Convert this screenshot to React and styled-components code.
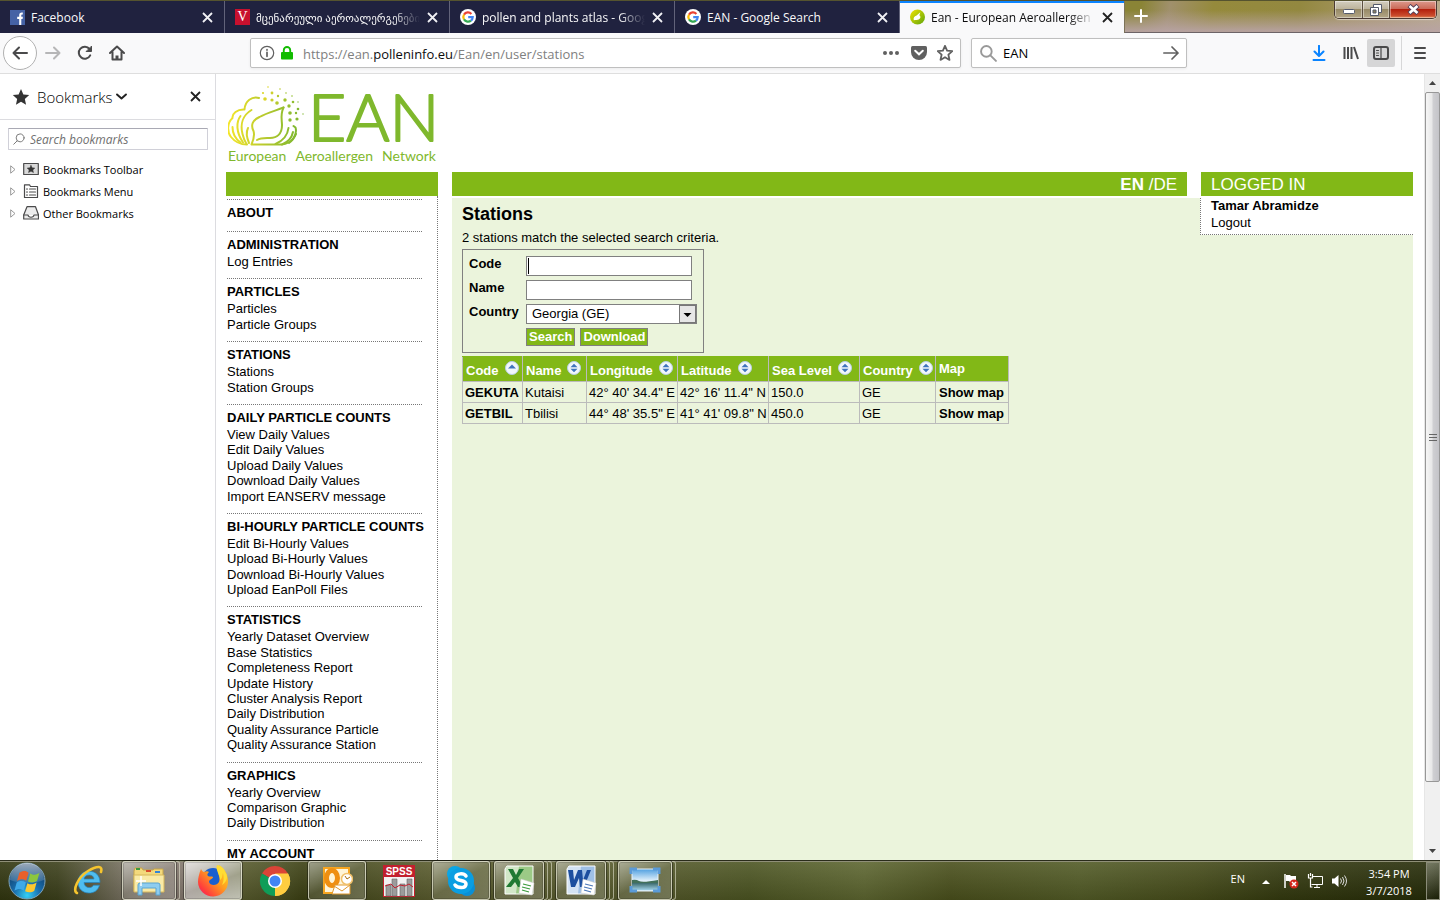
import React from "react";
import styled, { createGlobalStyle, css } from "styled-components";

const UI_FONT = '"Open Sans", "Noto Sans", "DejaVu Sans", sans-serif';
const PAGE_FONT = '"Liberation Sans", Arial, sans-serif';
const GREEN = "#82b817";
const PALE = "#ebf4dc";

const GlobalStyle = createGlobalStyle`
  *, *::before, *::after { box-sizing: border-box; }
  body { margin: 0; font-family: ${UI_FONT}; font-size: 12px; color: #000; overflow: hidden; }
  button, input, select { font: inherit; color: inherit; margin: 0; }
  button { border: 0; padding: 0; background: none; }
  a { color: inherit; text-decoration: none; }
  h1, h2, p, ul { margin: 0; padding: 0; }
  ul { list-style: none; }
  svg { display: block; flex: none; }
`;

/* ---------- browser window ---------- */

const Window = styled.div`
  display: flex;
  flex-direction: column;
  height: 100vh;
  background: #fff;
`;

const TitleBar = styled.header`
  display: flex;
  flex: none;
  height: 33px;
  border-top: 1px solid #55532f;
  background: linear-gradient(100deg, #8a8436 0 79%, #a0906c 81%, #958a3c 84%, #938840 90%, #a89868 95%, #b9ab8c);
`;

const GlassShade = styled.div`
  display: flex;
  flex: 1;
  justify-content: space-between;
  align-items: flex-start;
  padding-right: 3px;
  border-bottom: 1px solid #6d6467;
  background: linear-gradient(rgba(150, 130, 150, 0) 30%, rgba(184, 163, 164, 0.9) 95%);
`;

const Tab = styled.div`
  display: flex;
  align-items: center;
  width: 225px;
  gap: 6px;
  padding: 0 10px;
  color: ${(p) => (p.$active ? "#0c0c0d" : "#f9f9fa")};
  background: ${(p) => (p.$active ? "#f9f9fa" : "#20223f")};
  border-right: 1px solid ${(p) => (p.$active ? "#7c7358" : "#62637a")};
  ${(p) => p.$active && css`box-shadow: inset 0 2px #0a84ff;`}
`;

const TabTitle = styled.span`
  flex: 1;
  overflow: hidden;
  padding-top: 2px;
  white-space: nowrap;
  font-size: ${(p) => (p.$small ? 11 : 12)}px;
  line-height: 18px;
  ${(p) => p.$fade && css`mask-image: linear-gradient(to right, #000 84%, transparent);`}
`;

const IconButton = styled.button`
  display: flex;
  align-items: center;
  justify-content: center;
  flex: none;
  width: ${(p) => p.$width || 32}px;
  height: ${(p) => p.$height || 28}px;
  border-radius: 2px;
  background: ${(p) => (p.$pressed ? "#d6d6d7" : "none")};
`;

const WindowControls = styled.div`
  display: flex;
  height: 18px;
  border: 1px solid #4b3a33;
  border-top: 0;
  border-radius: 0 0 5px 5px;
  overflow: hidden;
  box-shadow: 0 1px 1px rgba(255, 255, 255, 0.5);
`;

const WindowButton = styled.button`
  display: flex;
  align-items: center;
  justify-content: center;
  width: ${(p) => (p.$close ? 47 : 27)}px;
  border-left: ${(p) => (p.$first ? 0 : 1)}px solid #5d5040;
  box-shadow: inset 0 0 0 1px rgba(255, 255, 255, 0.4);
  background: ${(p) =>
    p.$close
      ? "linear-gradient(#dc9a8d, #cb6a58 45%, #b3200d 50%, #c94a2c 85%, #e08a58)"
      : "linear-gradient(#d3cec0, #bdb49c 45%, #978a66 50%, #b3a687)"};
`;

const Toolbar = styled.div`
  display: flex;
  align-items: center;
  flex: none;
  height: 41px;
  padding: 0 3px;
  background: #f9f9fa;
  border-bottom: 1px solid #dedede;
`;

const BackButton = styled.button`
  display: flex;
  align-items: center;
  justify-content: center;
  width: 34px;
  height: 34px;
  border: 1px solid #b1b1b1;
  border-radius: 50%;
  background: #fff;
`;

const Field = styled.div`
  display: flex;
  align-items: center;
  flex: ${(p) => (p.$wide ? "1" : "0 0 216px")};
  min-width: 0;
  height: 30px;
  margin-left: ${(p) => (p.$wide ? 117 : 10)}px;
  padding: 0 6px 0 8px;
  gap: 6px;
  font-size: 13px;
  background: #fff;
  border: 1px solid #bfbfbf;
  border-radius: 2px;
  box-shadow: 0 1px 3px rgba(0, 0, 0, 0.06);
`;

const Address = styled.a`
  flex: 1;
  padding: 2px 0 0 4px;
  color: #808080;
  line-height: 20px;
  b { font-weight: 400; color: #0c0c0d; }
`;

const SearchInput = styled.input`
  flex: 1;
  width: 0;
  min-width: 0;
  padding: 0;
  border: 0;
  outline: 0;
  background: none;
`;

const ToolbarEnd = styled.div`
  display: flex;
  align-items: center;
  margin-left: 116px;
`;

const Separator = styled.span`
  width: 1px;
  height: 34px;
  margin-left: 6px;
  background: #d7d7d8;
`;

const Content = styled.div`
  display: flex;
  flex: 1;
  min-height: 0;
`;

/* ---------- bookmarks sidebar ---------- */

const Sidebar = styled.aside`
  flex: none;
  width: 216px;
  border-right: 1px solid #dcdce0;
`;

const SidebarHeader = styled.div`
  display: flex;
  align-items: center;
  height: 46px;
  padding: 0 12px;
  border-bottom: 1px solid #dcdce0;
`;

const SidebarTitle = styled.button`
  display: flex;
  flex: 1;
  align-items: center;
  gap: 3px;
  padding-left: 7px;
  font-size: 15px;
  font-weight: 300;
`;

const BookmarkSearch = styled.label`
  display: flex;
  align-items: center;
  gap: 5px;
  height: 22px;
  margin: 8px 7px 8px 8px;
  padding: 0 4px;
  border: 1px solid #d0d0d8;
  border-top-color: #a9a9b4;
  border-radius: 1px;
  input { font-style: italic; }
  input::placeholder { color: #6f6f6f; opacity: 1; }
`;

const TreeItem = styled.li`
  display: flex;
  align-items: center;
  height: 22px;
  padding-left: 10px;
  gap: 4px;
  font-size: 11px;
`;

const Twisty = styled.span`
  display: flex;
  width: 9px;
`;

/* ---------- EAN page ---------- */

const Page = styled.main`
  display: flex;
  flex-direction: column;
  flex: 1;
  min-width: 0;
  overflow: hidden;
  padding: 0 11px 0 10px;
  font-family: ${PAGE_FONT};
  font-size: 13px;
`;

const Brand = styled.div`
  flex: none;
  width: 212px;
  height: 98px;
  padding: 10px 2px 0;
  color: #7fb82d;
`;

const Tagline = styled.div`
  display: flex;
  justify-content: space-between;
  font: 14px/16px Lato, sans-serif;
`;

const Columns = styled.div`
  display: flex;
  flex: 1;
  min-height: 0;
  gap: 14px;
`;

const Bar = styled.div`
  flex: ${(p) => (p.$side ? "0 0 212px" : "1")};
  height: 24px;
  padding: 1px 10px 0;
  font-size: 17px;
  line-height: 24px;
  text-align: ${(p) => (p.$side ? "left" : "right")};
  color: #fff;
  background: ${GREEN};
`;

const NavColumn = styled.div`
  display: flex;
  flex-direction: column;
  width: 212px;
`;

const Nav = styled.nav`
  flex: 1;
  min-height: 0;
  overflow: hidden;
  padding: 3px 15px 0 1px;
  border-right: 1px dotted #777;
`;

const NavBar = styled.div`
  flex: none;
  height: 24px;
  background: ${GREEN};
`;

const NavGroup = styled.section`
  padding: 4px 0 9px;
  border-top: 1px dotted #777;
  line-height: 1.185;
`;

const NavHeading = styled.h2`
  font-size: 13px;
  line-height: 18px;
  white-space: nowrap;
`;

const MainColumn = styled.div`
  display: flex;
  flex-direction: column;
  flex: 1;
`;

const BarRow = styled.div`
  display: flex;
  flex: none;
  gap: 14px;
`;

const Panel = styled.div`
  display: flex;
  flex: 1;
  align-items: flex-start;
  justify-content: space-between;
  margin-top: 2px;
  padding-left: 10px;
  background: ${PALE};
`;

const UserBox = styled.div`
  width: 213px;
  height: 37px;
  padding-left: 10px;
  line-height: 16px;
  background: #fff;
  border: dotted #777;
  border-width: 0 0 1px 1px;
  a, b { display: block; }
  b { margin-bottom: 1px; }
`;

const Title = styled.h1`
  padding-top: 5px;
  font-size: 18px;
  line-height: 22px;
`;

const Summary = styled.p`
  margin: 5px 0 3px;
  line-height: 16px;
`;

const SearchForm = styled.form`
  display: grid;
  grid-template-columns: 57px 171px;
  row-gap: 4px;
  width: 242px;
  padding: 6px;
  border: 1px solid #808080;
  label { font-weight: 700; line-height: 16px; }
`;

const TextInput = styled.input`
  width: 166px;
  height: 20px;
  padding: 1px 2px;
  border: 1px solid #808080;
  border-radius: 0;
  outline: 0;
  background: #fff;
  ${(p) =>
    p.$caret &&
    css`
      caret-color: transparent;
      background: linear-gradient(#000, #000) 1px 1px / 1px 16px no-repeat #fff;
    `}
`;

const SelectBox = styled.div`
  display: flex;
  position: relative;
  svg { position: absolute; right: 1px; top: 1px; pointer-events: none; }
`;

const Select = styled.select`
  appearance: none;
  width: 100%;
  height: 20px;
  padding: 0 20px 2px 5px;
  border: 1px solid #808080;
  border-radius: 0;
  background: #fff;
`;

const Actions = styled.div`
  display: flex;
  grid-column: 2;
  gap: 5px;
`;

const ActionButton = styled.button`
  height: 18px;
  padding: 0 2px;
  border: 1px solid #808080;
  font-weight: 700;
  line-height: 16px;
  color: #fff;
  background: ${GREEN};
`;

const StationTable = styled.table`
  margin-top: 3px;
  width: 547px;
  table-layout: fixed;
  border-collapse: collapse;
  th, td { padding: 0 0 0 2px; border: 1px solid #bbb; text-align: left; white-space: nowrap; }
  th { height: 25px; padding-left: 3px; color: #fff; background: ${GREEN}; border-top-color: ${GREEN}; border-bottom-color: #bbb; }
  td { height: 21px; }
  td:first-child, td:last-child { font-weight: 700; }
  td:last-child { padding-left: 3px; }
`;

const HeadCell = styled.div`
  display: flex;
  align-items: center;
  gap: 6px;
  padding-bottom: ${(p) => (p.$sortable ? 3 : 1)}px;
  span { padding-top: ${(p) => (p.$sortable ? 5 : 0)}px; }
`;

/* ---------- scrollbar ---------- */

const Scrollbar = styled.div`
  display: flex;
  flex-direction: column;
  align-items: center;
  flex: none;
  width: 16px;
  padding: 6px 0;
  background: #f0f0f0;
  border-left: 1px solid #e6e6e6;
`;

const Thumb = styled.div`
  display: flex;
  align-items: center;
  justify-content: center;
  flex: 689;
  width: 15px;
  margin-top: 6px;
  border: 1px solid #979797;
  border-radius: 2px;
  background: linear-gradient(to right, #f6f6f6, #e8e8e8 45%, #cfcfd2 55%, #c4c4c8);
`;

const TrackRest = styled.div`
  flex: 66;
`;

/* ---------- taskbar ---------- */

const Taskbar = styled.footer`
  display: flex;
  flex: none;
  height: 40px;
  border-top: 1px solid #2a2c1b;
  box-shadow: inset 0 1px #8f8f78;
  background:
    linear-gradient(rgba(255, 255, 255, 0.1), rgba(0, 0, 0, 0.12)),
    linear-gradient(to right, #31360f, #3c401b 4%, #7c7566 9%, #85796f 13%, #56592b 17%, #4c5124 19%, #3c4013 21%, #5a5c2e 30%, #55592b 45%, #4c5522 52%, #5d6630 60%, #4a501c 66%, #525b26 75%, #464c1a 83%, #343a0f 89%, #252b08);
  color: #fff;
`;

const StartButton = styled.button`
  display: flex;
  align-items: center;
  justify-content: center;
  width: 54px;
`;

const Apps = styled.div`
  display: flex;
  flex: 1;
  gap: 4px;
  padding-left: 6px;
`;

const AppSlot = styled.div`
  display: flex;
  width: 58px;
  height: 39px;
`;

const AppButton = styled.button`
  display: flex;
  align-items: center;
  justify-content: center;
  flex: 1;
  ${(p) =>
    p.$open &&
    css`
      border: 1px solid rgba(225, 225, 205, 0.75);
      border-radius: 3px;
      background: ${p.$active
        ? "linear-gradient(160deg, rgba(255,255,255,.75), rgba(255,255,255,.4) 55%, rgba(255,255,255,.65))"
        : "linear-gradient(150deg, rgba(255,255,255,.45), rgba(255,255,255,.12) 50%, rgba(255,255,255,.22))"};
      box-shadow: inset 0 0 0 1px rgba(0, 0, 0, 0.15), 0 0 0 1px rgba(0, 0, 0, 0.35);
    `}
`;

const StackEdge = styled.span`
  width: 4px;
  border: 1px solid rgba(225, 225, 205, 0.6);
  border-left: 0;
  border-radius: 0 3px 3px 0;
`;

const Tray = styled.div`
  display: flex;
  align-items: center;
  font-size: 12px;
`;

const Language = styled.span`
  padding-bottom: 5px;
  font-size: 11px;
`;

const TrayIcons = styled.div`
  display: flex;
  align-items: center;
  gap: 8px;
  padding: 1px 17px 0 17px;
`;

const TrayArrow = styled.svg`
  margin-right: 5px;
`;

const Clock = styled.time`
  width: 50px;
  text-align: center;
  font-size: 11px;
  line-height: 17px;
  padding-top: 2px;
  white-space: nowrap;
`;

const ShowDesktop = styled.button`
  width: 14px;
  height: 38px;
  margin-left: 12px;
  border: 1px solid #8a8b78;
  background: linear-gradient(150deg, rgba(255, 255, 255, 0.3), rgba(0, 0, 0, 0.2));
`;

/* ---------- icons ---------- */

const Stroke = ({ size = 16, color = "#4a4a4b", width = 2, children }) => (
  <svg width={size} height={size} viewBox="0 0 16 16" fill="none" stroke={color} strokeWidth={width} strokeLinecap="round" strokeLinejoin="round">
    {children}
  </svg>
);

const CloseIcon = ({ color }) => (
  <svg width="11" height="11" viewBox="0 0 11 11" stroke={color} strokeWidth="1.8">
    <path d="M1 1l9 9M10 1L1 10" />
  </svg>
);

const GoogleIcon = () => (
  <svg width="16" height="16" viewBox="0 0 16 16">
    <circle cx="8" cy="8" r="8" fill="#fff" />
    <g fill="none" strokeWidth="2.2">
      <path d="M11.4 4.9A4.7 4.7 0 0 0 4 5.6" stroke="#ea4335" />
      <path d="M4 5.6a4.7 4.7 0 0 0 0 4.8" stroke="#fbbc05" />
      <path d="M4 10.4a4.7 4.7 0 0 0 7 1.2" stroke="#34a853" />
      <path d="M11 11.6A4.7 4.7 0 0 0 12.700 8.200H8.200" stroke="#4285f4" />
    </g>
  </svg>
);

const FacebookIcon = () => (
  <svg width="15" height="15" viewBox="0 0 15 15">
    <rect width="15" height="15" fill="#4562a5" />
    <path d="M9.200 15V9h-2V6.800h2V5.200c0-2 1.200-2.900 3.600-2.600v2c-1.200-.1-1.500.2-1.500 1v1.200h1.600L12.600 9h-1.300v6z" fill="#fff" />
  </svg>
);

const BadgeV = styled.span`
  display: flex;
  align-items: center;
  justify-content: center;
  width: 15px;
  height: 16px;
  font: 14px/16px "Liberation Serif", serif;
  color: #fff;
  background: #c8102e;
`;

const EanFavicon = () => (
  <svg width="15" height="16" viewBox="0 0 16 16">
    <defs>
      <linearGradient id="fav" x1="0" y1="0" x2="1" y2="1">
        <stop offset="0" stopColor="#f2e400" />
        <stop offset="1" stopColor="#5fa50c" />
      </linearGradient>
    </defs>
    <circle cx="8" cy="8" r="8" fill="url(#fav)" />
    <path d="M4 11.500c-.6-3 .4-4.500 3-5.200l4-3.300-1 3.200c1.600 1 1.600 3.600-.8 4.400-1.200.8-3 .1-5.200.9z" fill="#fff" />
  </svg>
);

const TABS = [
  { title: "Facebook", icon: <FacebookIcon /> },
  { title: "მცენარეული აეროალერგენები", icon: <BadgeV>V</BadgeV>, fade: true, small: true },
  { title: "pollen and plants atlas - Google Search", icon: <GoogleIcon />, fade: true },
  { title: "EAN - Google Search", icon: <GoogleIcon /> },
  { title: "Ean - European Aeroallergen Network", icon: <EanFavicon />, fade: true, active: true },
];

const StarShape = "M8 .8l2.100 4.900 5.200.5-3.900 3.500 1.100 5.200L8 12.200l-4.500 2.700 1.100-5.200L.7 6.200l5.200-.5z";

function BrowserTabs() {
  return (
    <TitleBar>
      {TABS.map((t) => (
        <Tab key={t.title} $active={t.active}>
          {t.icon}
          <TabTitle $fade={t.fade} $small={t.small}>{t.title}</TabTitle>
          <IconButton $width={13} $height={16} aria-label="Close tab">
            <CloseIcon color={t.active ? "#222" : "#f0f0f4"} />
          </IconButton>
        </Tab>
      ))}
      <GlassShade>
        <IconButton $width={32} $height={30} aria-label="New tab">
          <Stroke color="#fff" width={2}><path d="M8 2v12M2 8h12" /></Stroke>
        </IconButton>
        <WindowControls>
          <WindowButton $first aria-label="Minimize">
            <svg width="12" height="9"><rect x=".5" y="4.500" width="11" height="4" rx="1" fill="#fff" stroke="#545b6c" /></svg>
          </WindowButton>
          <WindowButton aria-label="Restore">
            <svg width="12" height="12" viewBox="0 0 12 12" fill="#fff" stroke="#545b6c">
              <path d="M3.500.5h8v8h-8z" /><path d="M.5 3.500h8v8h-8z" /><path d="M3 6h3v3H3z" fill="#8d8260" />
            </svg>
          </WindowButton>
          <WindowButton $close aria-label="Close">
            <svg width="13" height="11" viewBox="0 0 13 11">
              <path d="M2 1.500l9 8M11 1.500l-9 8" stroke="#54415a" strokeWidth="4.500" /><path d="M2.500 2l8 7M10.500 2l-8 7" stroke="#fff" strokeWidth="2.600" />
            </svg>
          </WindowButton>
        </WindowControls>
      </GlassShade>
    </TitleBar>
  );
}

function BrowserToolbar() {
  return (
    <Toolbar>
      <BackButton aria-label="Back">
        <Stroke><path d="M15 8H1.500M7 2.500L1.500 8 7 13.500" /></Stroke>
      </BackButton>
      <IconButton aria-label="Forward">
        <Stroke color="#b6b6b7"><path d="M1 8h13.500M9 2.500L14.500 8 9 13.500" /></Stroke>
      </IconButton>
      <IconButton aria-label="Reload">
        <Stroke><path d="M13.200 10.400A6 6 0 1 1 12.500 4" /><path d="M14.500 1.500v5h-5z" fill="#4a4a4b" strokeWidth="1" /></Stroke>
      </IconButton>
      <IconButton aria-label="Home">
        <Stroke><path d="M1 8l7-6.500L15 8M3.500 7v7.500h9V7" /><path d="M8 14v-3.500" strokeWidth="3" strokeLinecap="butt" /></Stroke>
      </IconButton>
      <Field $wide>
        <Stroke width={1.2} color="#606060"><circle cx="8" cy="8" r="6.700" /><path d="M8 7.300v4M8 4.700v.4" strokeWidth="1.700" /></Stroke>
        <svg width="12" height="14" viewBox="0 0 13 15"><path d="M3 7V4.500a3.500 3.500 0 0 1 7 0V7" fill="none" stroke="#12bc00" strokeWidth="2" /><rect x="0" y="6.500" width="13" height="8" rx="1" fill="#12bc00" /></svg>
        <Address href="#">https://ean.<b>polleninfo.eu</b>/Ean/en/user/stations</Address>
        <IconButton $width={22} aria-label="Page actions">
          <svg width="16" height="4" fill="#606060"><circle cx="2" cy="2" r="2" /><circle cx="8" cy="2" r="2" /><circle cx="14" cy="2" r="2" /></svg>
        </IconButton>
        <IconButton $width={22} aria-label="Save to Pocket">
          <svg width="16" height="14" viewBox="0 0 16 14"><path d="M1.500 0h13Q16 0 16 1.500V6a8 8 0 0 1-16 0V1.500Q0 0 1.500 0z" fill="#606060" /><path d="M4.200 4.700L8 8.300l3.800-3.600" fill="none" stroke="#fff" strokeWidth="2" strokeLinecap="round" /></svg>
        </IconButton>
        <IconButton $width={18} aria-label="Bookmark this page">
          <Stroke color="#606060" width={1.8}><path d={StarShape} /></Stroke>
        </IconButton>
      </Field>
      <Field>
        <Stroke size={17} color="#999" width={1.8}><circle cx="6" cy="6" r="5" /><path d="M9.800 9.800L15 15" /></Stroke>
        <SearchInput aria-label="Web search" defaultValue="EAN" />
        <IconButton $width={18} aria-label="Search">
          <Stroke color="#606060" width={1.7}><path d="M.8 8H15M9 2l6 6-6 6" /></Stroke>
        </IconButton>
      </Field>
      <ToolbarEnd>
        <IconButton aria-label="Downloads">
          <Stroke color="#0a84ff"><path d="M8 .8v10M3.500 6.500L8 11l4.500-4.500M2.500 15h11" /></Stroke>
        </IconButton>
        <IconButton aria-label="Library">
          <Stroke><path d="M1.500 2v12M5 2v12M8.500 2v12M11 2l4 12" strokeLinecap="butt" /></Stroke>
        </IconButton>
        <IconButton $pressed $width={28} aria-label="Sidebars">
          <Stroke><rect x="1" y="2" width="14" height="12" rx="2" /><path d="M8 2v12M3.500 5.500h2M3.500 8h2M3.500 10.500h2" strokeWidth="1.200" /></Stroke>
        </IconButton>
        <Separator />
        <IconButton $width={35} aria-label="Open menu">
          <Stroke><path d="M3 3h10M3 8h10M3 13h10" /></Stroke>
        </IconButton>
      </ToolbarEnd>
    </Toolbar>
  );
}

const FOLDERS = [
  {
    name: "Bookmarks Toolbar",
    icon: <><rect x=".7" y="2.500" width="14.600" height="11" fill="#d9d9d9" /><path d="M8 4.300l1.200 2.500 2.700.3-2 1.800.6 2.700L8 10.300l-2.500 1.300.6-2.700-2-1.800 2.700-.3z" fill="#333" strokeWidth=".5" /></>,
  },
  {
    name: "Bookmarks Menu",
    icon: <><path d="M1.500 1.800h5l1 1.700h7v11h-13z" fill="#fff" /><path d="M6.500 6h6M6.500 9h6M6.500 12h6M3.500 6h1M3.500 9h1M3.500 12h1" /></>,
  },
  {
    name: "Other Bookmarks",
    icon: <><path d="M4 1.700h8.500l3 8.300v4H.7v-4z" fill="#ececec" /><path d="M.7 10H5c.5 3 5.500 3 6 0h4.500" fill="#fff" /></>,
  },
];

function Bookmarks() {
  return (
    <Sidebar>
      <SidebarHeader>
        <svg width="18" height="18" viewBox="0 0 16 16"><path d={StarShape} fill="#333" /></svg>
        <SidebarTitle>
          Bookmarks
          <Stroke size={11} width={2.800} color="#222"><path d="M1.500 5l6.500 6 6.500-6" /></Stroke>
        </SidebarTitle>
        <IconButton $width={16} aria-label="Close sidebar"><CloseIcon color="#222" /></IconButton>
      </SidebarHeader>
      <BookmarkSearch>
        <Stroke size={12} width={1.300} color="#777"><circle cx="9.500" cy="6.500" r="5.300" /><path d="M5.500 10.500L1 15" /></Stroke>
        <SearchInput aria-label="Search bookmarks" placeholder="Search bookmarks" />
      </BookmarkSearch>
      <ul>
        {FOLDERS.map((f) => (
          <TreeItem key={f.name}>
            <Twisty><svg width="6" height="9" viewBox="0 0 6 9"><path d="M.7.8v7.400L5 4.500z" fill="#fff" stroke="#999" /></svg></Twisty>
            <Stroke width={1.2}>{f.icon}</Stroke>
            {f.name}
          </TreeItem>
        ))}
      </ul>
    </Sidebar>
  );
}

const POLLEN = [
  [40, 3, 0.8, "#dcd62a"], [35, 9, 1.1, "#dcd62a"], [44, 9, 1.4, "#cdd02b"], [37, 15, 1.8, "#dcd62a"], [44, 16, 1.6, "#c8ce2b"],
  [52, 5, 0.8, "#b8ca2c"], [50, 12, 1.2, "#b5c92d"], [49, 19, 1.8, "#b5c92d"], [58, 9, 0.8, "#a3c42e"], [57, 16, 1.7, "#a3c42e"],
  [64, 12, 0.8, "#93bf2f"], [65, 18, 1.3, "#90bd2f"], [61, 22, 1.7, "#96c02f"], [70, 18, 0.7, "#83b830"], [70, 25, 1.3, "#83b830"],
  [62, 29, 1.8, "#8fbd2f"], [68, 29, 1.2, "#88ba2f"], [62, 36, 1.7, "#8bbb2f"], [69, 35, 1.6, "#85b92f"], [75, 30, 0.7, "#7fb72f"],
];

function Logo() {
  return (
    <Brand>
      <svg width="208" height="64" viewBox="0 0 208 64" role="img" aria-label="EAN">
        <defs>
          <linearGradient id="leaf" gradientUnits="userSpaceOnUse" x1="0" y1="0" x2="68" y2="0">
            <stop offset="0" stopColor="#f5e62a" />
            <stop offset=".5" stopColor="#bccb2d" />
            <stop offset="1" stopColor="#80b82f" />
          </linearGradient>
        </defs>
        <g fill="none" stroke="url(#leaf)" strokeWidth="2" strokeLinecap="round" strokeLinejoin="round">
          <path d="M31 14c-7-2-14 3-14.500 11.500C9 25 4 30 4.500 34-1 39-1 48 3 53c4 5 9 7.500 16 7.500" />
          <path d="M23.500 26C15 31 12 40 14.500 50c1 4 2 7 4 10M12.500 32C8 38 8 48 15 58.500M4.500 43c0 6 3 12 8 15.500M20 44c-1.500 3-1.500 9 1 15" />
          <path d="M55.500 23.500c-7 3-16 5-24 9.500-7 3-9 8-6 14 1.500 5 0 9-2 13.500h30c11-1 16-10 14-17l-2-1.500" />
          <path d="M55.500 23.500C52 31 54 36 54 41c0 9-5 13-12 13-5 0-9-.5-13 2" />
          <path d="M60.500 44c-1 8-6 13-13 16M65 48c-1 5-5 10-11 12.500M68 50c-2 5-4 7-7 9" />
        </g>
        {POLLEN.map(([x, y, r, c]) => <circle key={`${x}-${y}`} cx={x} cy={y} r={r} fill={c} />)}
        <text x="80" y="57" fontFamily="Lato, sans-serif" fontSize="66" fontWeight="300" fill="#7fb82d" stroke="#7fb82d" strokeWidth="2" strokeLinejoin="round">EAN</text>
      </svg>
      <Tagline><span>European</span><span>Aeroallergen</span><span>Network</span></Tagline>
    </Brand>
  );
}

const MENU = [
  ["ABOUT", []],
  ["ADMINISTRATION", ["Log Entries"]],
  ["PARTICLES", ["Particles", "Particle Groups"]],
  ["STATIONS", ["Stations", "Station Groups"]],
  ["DAILY PARTICLE COUNTS", ["View Daily Values", "Edit Daily Values", "Upload Daily Values", "Download Daily Values", "Import EANSERV message"]],
  ["BI-HOURLY PARTICLE COUNTS", ["Edit Bi-Hourly Values", "Upload Bi-Hourly Values", "Download Bi-Hourly Values", "Upload EanPoll Files"]],
  ["STATISTICS", ["Yearly Dataset Overview", "Base Statistics", "Completeness Report", "Update History", "Cluster Analysis Report", "Daily Distribution", "Quality Assurance Particle", "Quality Assurance Station"]],
  ["GRAPHICS", ["Yearly Overview", "Comparison Graphic", "Daily Distribution"]],
  ["MY ACCOUNT", []],
];

const SortIcon = ({ ascending }) => (
  <svg width="14" height="14" viewBox="0 0 14 14">
    <circle cx="7" cy="7" r="6.500" fill="#f1f6fb" stroke="#b9cfe4" />
    <path d={ascending ? "M3 7.500L7 3.500l4 4z" : "M3.500 6.200L7 2.700l3.500 3.500zM3.500 7.800L7 11.300l3.500-3.500z"} fill="#3f74bd" />
  </svg>
);

const HEADINGS = [["Code", 60], ["Name", 64], ["Longitude", 91], ["Latitude", 91], ["Sea Level", 91], ["Country", 76], ["Map", 73]];

const STATIONS = [
  ["GEKUTA", "Kutaisi", "42° 40' 34.4\" E", "42° 16' 11.4\" N", "150.0", "GE"],
  ["GETBIL", "Tbilisi", "44° 48' 35.5\" E", "41° 41' 09.8\" N", "450.0", "GE"],
];

function Stations() {
  return (
    <section>
      <Title>Stations</Title>
      <Summary>2 stations match the selected search criteria.</Summary>
      <SearchForm onSubmit={(e) => e.preventDefault()}>
        <label htmlFor="code">Code</label>
        <TextInput id="code" $caret />
        <label htmlFor="name">Name</label>
        <TextInput id="name" />
        <label htmlFor="country">Country</label>
        <SelectBox>
          <Select id="country"><option>Georgia (GE)</option></Select>
          <svg width="17" height="18" viewBox="0 0 17 18"><rect x=".5" y=".5" width="16" height="17" fill="#e6e6e6" stroke="#777" /><path d="M4.500 8h8l-4 4z" fill="#000" /></svg>
        </SelectBox>
        <Actions>
          <ActionButton type="submit">Search</ActionButton>
          <ActionButton type="button">Download</ActionButton>
        </Actions>
      </SearchForm>
      <StationTable>
        <colgroup>{HEADINGS.map(([h, w]) => <col key={h} width={w} />)}</colgroup>
        <thead>
          <tr>
            {HEADINGS.map(([h]) => (
              <th key={h}>
                <HeadCell $sortable={h !== "Map"}>
                  <span>{h}</span>
                  {h !== "Map" && <SortIcon ascending={h === "Code"} />}
                </HeadCell>
              </th>
            ))}
          </tr>
        </thead>
        <tbody>
          {STATIONS.map((row) => (
            <tr key={row[0]}>
              {row.map((cell) => <td key={cell}>{cell}</td>)}
              <td><a href="#">Show map</a></td>
            </tr>
          ))}
        </tbody>
      </StationTable>
    </section>
  );
}

function EanPage() {
  return (
    <Page>
      <Logo />
      <Columns>
        <NavColumn>
          <NavBar />
          <Nav>
            {MENU.map(([heading, links]) => (
              <NavGroup key={heading}>
                <NavHeading>{heading}</NavHeading>
                <ul>{links.map((l) => <li key={l}><a href="#">{l}</a></li>)}</ul>
              </NavGroup>
            ))}
          </Nav>
        </NavColumn>
        <MainColumn>
          <BarRow>
            <Bar><a href="#"><b>EN</b></a> <a href="#">/DE</a></Bar>
            <Bar $side>LOGGED IN</Bar>
          </BarRow>
          <Panel>
            <Stations />
            <UserBox><b>Tamar Abramidze</b><a href="#">Logout</a></UserBox>
          </Panel>
        </MainColumn>
      </Columns>
    </Page>
  );
}

/* ---------- taskbar artwork ---------- */

const App32 = ({ children }) => <svg width="32" height="32" viewBox="0 0 32 32">{children}</svg>;

const WindowsFlag = () => (
  <>
    <path d="M9 12c3-2 6-2 8 0l-2 7c-2-2-5-2-8 0z" fill="#e8602c" />
    <path d="M18.500 12.500c3 2 6 1 8-.5l-2 7c-2 1.500-5 2-8 .5z" fill="#8cc63e" />
    <path d="M6.700 20.500c3-1.700 5.500-1.700 8 0l-2 7c-2-2-5-2-8 0z" fill="#3fa9e8" />
    <path d="M16 21c3 1.800 5.500 1 8-.5l-2 7c-2 1.500-5 2-8 .5z" fill="#fdc82f" />
  </>
);

const StartOrb = () => (
  <svg width="38" height="38" viewBox="0 0 38 38">
    <defs>
      <radialGradient id="orb" cx=".5" cy=".9" r=".9">
        <stop offset="0" stopColor="#35d0f5" /><stop offset=".4" stopColor="#1a6fae" /><stop offset="1" stopColor="#0c2f57" />
      </radialGradient>
      <linearGradient id="gloss" x1="0" y1="0" x2="0" y2="1">
        <stop offset="0" stopColor="#fff" stopOpacity=".6" /><stop offset="1" stopColor="#fff" stopOpacity=".1" />
      </linearGradient>
    </defs>
    <circle cx="19" cy="19" r="18" fill="url(#orb)" stroke="#7fa3b8" />
    <path d="M2 18a17 17 0 0 1 34 0c-9 4-25 4-34 0z" fill="url(#gloss)" />
    <g transform="translate(1 -3) scale(1.150)"><WindowsFlag /></g>
  </svg>
);

const ExplorerArt = () => (
  <App32>
    <path d="M1 6l1-3h7l1 2h10l1-1h9v22H1z" fill="#f3d97c" stroke="#c9a648" />
    <path d="M3 4h4" stroke="#3a9a3c" strokeWidth="2" /><path d="M13 6h5" stroke="#d84c2c" strokeWidth="2" /><path d="M22 7h5" stroke="#3385d6" strokeWidth="2" />
    <path d="M1 10h30v17H1z" fill="#f9eaa6" stroke="#d6b75a" />
    <path d="M5 30V20q0-2 2-2h18q2 0 2 2v10h-4v-7H9v7z" fill="#8ecdf0" stroke="#5ba4d0" />
    <path d="M8 11v10M3 16h10" stroke="#fff" strokeWidth="1.500" />
  </App32>
);

const IeArt = () => (
  <App32>
    <path d="M27 17.500H11c.3 3.500 2.500 5 5.200 5 2 0 3.400-.8 4.300-2.300h6C25 25.500 21 28 16 28 9.500 28 5 23.500 5 17.200 5 11 9.700 6.200 16 6.200c6.700 0 11 4.300 11 11.300zM11 14h10c-.3-2.500-2-4-4.800-4S11.500 11.500 11 14z" fill="#4fbdf0" stroke="#2484c0" strokeWidth=".7" />
    <path d="M4 28C-1 26 5 12 15 6S30 1 28 7" fill="none" stroke="#f6c52e" strokeWidth="2.600" strokeLinecap="round" />
  </App32>
);

const FirefoxArt = () => (
  <App32>
    <defs><linearGradient id="fox" x1="1" y1="0" x2="0" y2="1"><stop offset="0" stopColor="#ffe226" /><stop offset=".45" stopColor="#ff9a1f" /><stop offset=".8" stopColor="#ff3b3d" /><stop offset="1" stopColor="#e31587" /></linearGradient></defs>
    <circle cx="16" cy="14" r="11" fill="#1a5fd0" />
    <path d="M4 4c1 2 2 3 3 3 2-1 4-1 5 0-2 2-2 3-1 4 1 1 4 0 5 1 0 2-4 2-4 5 1 4 8 4 10 0 2-5-2-7 0-12 1-2 0-4 0-5 5 3 9 9 9 16A15 15 0 0 1 1 17C1 13 2 9 4 4z" fill="url(#fox)" />
    <path d="M20 0c-2 5 3 9 3 15 3-2 2-5 3-7 1 4 1 8-1 12 6-4 6-10 3-13 0-3-5-7-8-7z" fill="#ffdd33" />
  </App32>
);

const ChromeArt = () => (
  <App32>
    <path d="M16 16L3 8.500A15 15 0 0 1 29 8.500z" fill="#db4437" />
    <path d="M16 16l13-7.500A15 15 0 0 1 16 31z" fill="#ffcd40" />
    <path d="M16 16v15A15 15 0 0 1 3 8.500z" fill="#0f9d58" />
    <path d="M16 8.500h13A15 15 0 0 1 16 31l6.500-11z" fill="#ffcd40" />
    <circle cx="16" cy="16" r="7" fill="#fff" /><circle cx="16" cy="16" r="5.500" fill="#4285f4" />
  </App32>
);

const OutlookArt = () => (
  <App32>
    <rect x="2" y="2" width="27" height="27" fill="#f6a520" /><rect x="4" y="4" width="23" height="23" fill="#fff4d6" />
    <ellipse cx="11" cy="13" rx="5.500" ry="7.500" fill="none" stroke="#ef8f12" strokeWidth="5" />
    <path d="M14 20h15v9H11z" fill="#fff" stroke="#e0992c" /><path d="M13 21l8 5 8-6" fill="none" stroke="#e0992c" />
    <circle cx="26" cy="14" r="5.500" fill="#fff" stroke="#f1c069" strokeWidth="1.500" /><path d="M24 11l2 3 3-2" fill="none" stroke="#a86c10" />
  </App32>
);

const SpssArt = () => (
  <App32>
    <rect width="32" height="32" fill="#c2202e" /><rect x="1" y="12" width="30" height="19" fill="#f2f2f2" />
    <path d="M3 20h5v11H3zM9 14h5v17H9zM17 19h5v12h-5zM24 14h5v17h-5z" fill="#9c9c9c" stroke="#666" strokeWidth=".6" />
    <path d="M2 21l6-2 4 4 5-3 5 1 4-2 4 3" fill="none" stroke="#c2202e" />
    <text x="16" y="10" textAnchor="middle" fontFamily="Liberation Sans, sans-serif" fontWeight="700" fontSize="10" fill="#fff">SPSS</text>
  </App32>
);

const SkypeArt = () => (
  <App32>
    <circle cx="10" cy="9" r="8" fill="#0aa6e6" /><circle cx="22" cy="23" r="8" fill="#0a8fd6" /><circle cx="16" cy="16" r="13" fill="#0a9ee2" />
    <path d="M21 11c-2-3-10-3-10 1 0 5 10 2 10 7 0 5-9 4-11 1" fill="none" stroke="#fff" strokeWidth="3.500" strokeLinecap="round" />
  </App32>
);

const OfficeArt = ({ color, light, mark }) => (
  <App32>
    <path d="M4 1h26v28H2V4z" fill={light} stroke="#fff" /><path d="M2 4l3-3h11l-3 28H2z" fill="#fff" opacity=".55" />
    {mark}
    <path d="M18 14l13 4-2 12-13-2z" fill="#fff" stroke="#ccc" strokeWidth=".5" />
    <path d="M20 19l8 2M19 22l8 2M19 25l7 2" stroke={color} strokeWidth="1.200" />
  </App32>
);

const ExcelArt = () => (
  <OfficeArt color="#3a9a3c" light="#9cca86" mark={<path d="M5 4h5l3 6 3-6h5l-6 9 5 9h-5l-3-5-4 5H3l7-9z" fill="#207a33" />} />
);

const WordArt = () => (
  <OfficeArt color="#4a77b8" light="#9fc0e6" mark={<path d="M3 5h5l1 10 4-10h4l1 10 4-10h4l-7 17h-4l-1-9-4 9H6z" fill="#1d4f9f" />} />
);

const PictureArt = () => (
  <App32>
    <defs>
      <linearGradient id="sky" x1="0" y1="0" x2="0" y2="1">
        <stop offset="0" stopColor="#4f9fe0" /><stop offset=".55" stopColor="#e6f3fb" /><stop offset="1" stopColor="#bfe0f2" />
      </linearGradient>
      <linearGradient id="lake" x1="0" y1="0" x2="0" y2="1">
        <stop offset="0" stopColor="#3b6a6c" /><stop offset="1" stopColor="#9fd0e6" />
      </linearGradient>
    </defs>
    <rect x="3" y="4" width="26" height="22" fill="url(#sky)" stroke="#e8f2f8" />
    <path d="M3 15q4-1 7 1t19-1v4H3z" fill="#42705a" /><path d="M3 18h26v7H3z" fill="url(#lake)" />
    <path d="M2 9V4h6M24 4h6v5M30 21v5h-6M8 26H2v-5" fill="none" stroke="#5b9bd8" strokeWidth="3" />
  </App32>
);

const APPS = [
  { name: "Internet Explorer", art: <IeArt /> },
  { name: "Explorer", art: <ExplorerArt />, open: true, stack: 1 },
  { name: "Firefox", art: <FirefoxArt />, open: true, active: true },
  { name: "Chrome", art: <ChromeArt /> },
  { name: "Outlook", art: <OutlookArt />, open: true },
  { name: "SPSS", art: <SpssArt /> },
  { name: "Skype", art: <SkypeArt />, open: true },
  { name: "Excel", art: <ExcelArt />, open: true, stack: 2 },
  { name: "Word", art: <WordArt />, open: true, stack: 2 },
  { name: "Pictures", art: <PictureArt />, open: true, stack: 1 },
];

function WindowsTaskbar() {
  return (
    <Taskbar>
      <StartButton aria-label="Start"><StartOrb /></StartButton>
      <Apps>
        {APPS.map((a) => (
          <AppSlot key={a.name}>
            <AppButton $open={a.open} $active={a.active} aria-label={a.name}>{a.art}</AppButton>
            {Array.from({ length: a.stack || 0 }, (_, i) => <StackEdge key={i} />)}
          </AppSlot>
        ))}
      </Apps>
      <Tray>
        <Language>EN</Language>
        <TrayIcons>
          <TrayArrow width="8" height="5"><path d="M0 5l4-4 4 4z" fill="#fff" /></TrayArrow>
          <svg width="16" height="16" viewBox="0 0 16 16"><path d="M2 1v14" stroke="#fff" strokeWidth="1.500" /><path d="M3 2h4l1 1h5v6H7L6 8H3z" fill="#fff" /><circle cx="11" cy="11" r="4.500" fill="#d3261b" /><path d="M9 9l4 4M13 9l-4 4" stroke="#fff" strokeWidth="1.500" /></svg>
          <svg width="16" height="16" viewBox="0 0 16 16" fill="none" stroke="#fff"><path d="M5 3.500h10.500v8H4.500M7 14.500h6M10 12v2" /><path d="M1.500 1v4h4V1M3.500 0v3M3.500 5v9h2" strokeWidth="1.200" /></svg>
          <svg width="16" height="16" viewBox="0 0 16 16"><path d="M1 5.500h2.500L7.500 2v12l-4-3.500H1z" fill="#fff" /><path d="M9.500 5.500q2 2.500 0 5M11.500 4q3 4 0 8M13.500 2.500q4 5.500 0 11" fill="none" stroke="#ddd" /></svg>
        </TrayIcons>
        <Clock>3:54 PM<br />3/7/2018</Clock>
        <ShowDesktop aria-label="Show desktop" />
      </Tray>
    </Taskbar>
  );
}

export default function App() {
  return (
    <>
      <GlobalStyle />
      <Window>
        <BrowserTabs />
        <BrowserToolbar />
        <Content>
          <Bookmarks />
          <EanPage />
          <Scrollbar>
            <svg width="7" height="6"><path d="M0 5l3.500-4L7 5z" fill="#444" /></svg>
            <Thumb><svg width="8" height="9" stroke="#666"><path d="M0 1.500h8M0 4.500h8M0 7.500h8" /></svg></Thumb>
            <TrackRest />
            <svg width="7" height="6"><path d="M0 1l3.500 4L7 1z" fill="#444" /></svg>
          </Scrollbar>
        </Content>
        <WindowsTaskbar />
      </Window>
    </>
  );
}
